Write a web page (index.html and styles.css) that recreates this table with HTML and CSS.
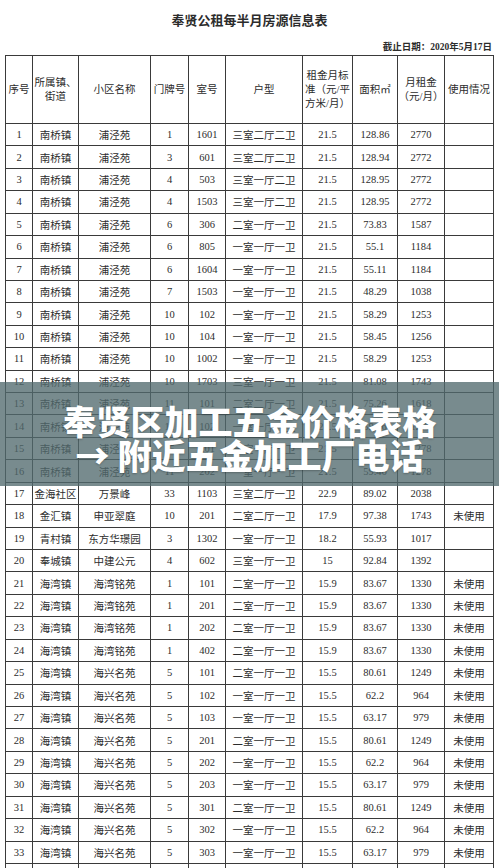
FILE: index.html
```html
<!DOCTYPE html>
<html lang="zh">
<head>
<meta charset="utf-8">
<title>奉贤公租每半月房源信息表</title>
<link rel="stylesheet" href="styles.css">
</head>
<body>
<div class="page">
  <h1 class="title">奉贤公租每半月房源信息表</h1>
  <div class="date">截止日期：2020年5月17日</div>
  <table class="grid">
    <colgroup>
      <col class="c1"><col class="c2"><col class="c3"><col class="c4"><col class="c5">
      <col class="c6"><col class="c7"><col class="c8"><col class="c9"><col class="c10">
    </colgroup>
    <thead>
      <tr>
        <th>序号</th><th>所属镇、<br>街道</th><th>小区名称</th><th>门牌号</th><th>室号</th><th>户型</th>
        <th>租金月标<br>准（元/平<br>方米/月）</th><th>面积㎡</th><th>月租金<br>（元/月）</th><th>使用情况</th>
      </tr>
    </thead>
    <tbody>
      <tr><td>1</td><td>南桥镇</td><td>浦泾苑</td><td>1</td><td>1601</td><td>三室二厅二卫</td><td>21.5</td><td>128.86</td><td>2770</td><td></td></tr>
      <tr><td>2</td><td>南桥镇</td><td>浦泾苑</td><td>3</td><td>601</td><td>三室二厅二卫</td><td>21.5</td><td>128.94</td><td>2772</td><td></td></tr>
      <tr><td>3</td><td>南桥镇</td><td>浦泾苑</td><td>4</td><td>503</td><td>三室一厅二卫</td><td>21.5</td><td>128.95</td><td>2772</td><td></td></tr>
      <tr><td>4</td><td>南桥镇</td><td>浦泾苑</td><td>4</td><td>1503</td><td>三室一厅二卫</td><td>21.5</td><td>128.95</td><td>2772</td><td></td></tr>
      <tr><td>5</td><td>南桥镇</td><td>浦泾苑</td><td>6</td><td>306</td><td>二室一厅一卫</td><td>21.5</td><td>73.83</td><td>1587</td><td></td></tr>
      <tr><td>6</td><td>南桥镇</td><td>浦泾苑</td><td>6</td><td>805</td><td>一室一厅一卫</td><td>21.5</td><td>55.1</td><td>1184</td><td></td></tr>
      <tr><td>7</td><td>南桥镇</td><td>浦泾苑</td><td>6</td><td>1604</td><td>一室一厅一卫</td><td>21.5</td><td>55.11</td><td>1184</td><td></td></tr>
      <tr><td>8</td><td>南桥镇</td><td>浦泾苑</td><td>7</td><td>1503</td><td>一室一厅一卫</td><td>21.5</td><td>48.29</td><td>1038</td><td></td></tr>
      <tr><td>9</td><td>南桥镇</td><td>浦泾苑</td><td>10</td><td>102</td><td>一室一厅一卫</td><td>21.5</td><td>58.29</td><td>1253</td><td></td></tr>
      <tr><td>10</td><td>南桥镇</td><td>浦泾苑</td><td>10</td><td>104</td><td>一室一厅一卫</td><td>21.5</td><td>58.45</td><td>1256</td><td></td></tr>
      <tr><td>11</td><td>南桥镇</td><td>浦泾苑</td><td>10</td><td>1002</td><td>一室一厅一卫</td><td>21.5</td><td>58.29</td><td>1253</td><td></td></tr>
      <tr><td>12</td><td>南桥镇</td><td>浦泾苑</td><td>10</td><td>1703</td><td>三室一厅一卫</td><td>21.5</td><td>81.08</td><td>1743</td><td></td></tr>
      <tr><td>13</td><td>南桥镇</td><td>浦泾苑</td><td>11</td><td>101</td><td>二室二厅一卫</td><td>21.5</td><td>75.26</td><td>1618</td><td></td></tr>
      <tr><td>14</td><td>南桥镇</td><td>浦泾苑</td><td>11</td><td>102</td><td>一室一厅一卫</td><td>21.5</td><td>59.46</td><td>1278</td><td></td></tr>
      <tr><td>15</td><td>南桥镇</td><td>浦泾苑</td><td>15</td><td>201</td><td>一室一厅一卫</td><td>21.5</td><td>59.46</td><td>1278</td><td></td></tr>
      <tr><td>16</td><td>南桥镇</td><td>浦泾苑</td><td>11</td><td>202</td><td>一室一厅一卫</td><td>21.5</td><td>59.46</td><td>1278</td><td></td></tr>
      <tr><td>17</td><td>金海社区</td><td>万景峰</td><td>33</td><td>1103</td><td>三室二厅一卫</td><td>22.9</td><td>89.02</td><td>2038</td><td></td></tr>
      <tr><td>18</td><td>金汇镇</td><td>申亚翠庭</td><td>10</td><td>201</td><td>二室二厅一卫</td><td>17.9</td><td>97.38</td><td>1743</td><td>未使用</td></tr>
      <tr><td>19</td><td>青村镇</td><td>东方华璟园</td><td>3</td><td>1302</td><td>一室一厅一卫</td><td>18.2</td><td>55.93</td><td>1017</td><td></td></tr>
      <tr><td>20</td><td>奉城镇</td><td>中建公元</td><td>4</td><td>602</td><td>三室一厅一卫</td><td>15</td><td>92.84</td><td>1392</td><td></td></tr>
      <tr><td>21</td><td>海湾镇</td><td>海湾铭苑</td><td>1</td><td>101</td><td>二室一厅一卫</td><td>15.9</td><td>83.67</td><td>1330</td><td>未使用</td></tr>
      <tr><td>22</td><td>海湾镇</td><td>海湾铭苑</td><td>1</td><td>201</td><td>二室一厅一卫</td><td>15.9</td><td>83.67</td><td>1330</td><td>未使用</td></tr>
      <tr><td>23</td><td>海湾镇</td><td>海湾铭苑</td><td>1</td><td>202</td><td>二室一厅一卫</td><td>15.9</td><td>83.67</td><td>1330</td><td>未使用</td></tr>
      <tr><td>24</td><td>海湾镇</td><td>海湾铭苑</td><td>1</td><td>402</td><td>二室一厅一卫</td><td>15.9</td><td>83.67</td><td>1330</td><td>未使用</td></tr>
      <tr><td>25</td><td>海湾镇</td><td>海兴名苑</td><td>5</td><td>101</td><td>二室一厅一卫</td><td>15.5</td><td>80.61</td><td>1249</td><td>未使用</td></tr>
      <tr><td>26</td><td>海湾镇</td><td>海兴名苑</td><td>5</td><td>102</td><td>一室一厅一卫</td><td>15.5</td><td>62.2</td><td>964</td><td>未使用</td></tr>
      <tr><td>27</td><td>海湾镇</td><td>海兴名苑</td><td>5</td><td>103</td><td>一室一厅一卫</td><td>15.5</td><td>63.17</td><td>979</td><td>未使用</td></tr>
      <tr><td>28</td><td>海湾镇</td><td>海兴名苑</td><td>5</td><td>201</td><td>二室一厅一卫</td><td>15.5</td><td>80.61</td><td>1249</td><td>未使用</td></tr>
      <tr><td>29</td><td>海湾镇</td><td>海兴名苑</td><td>5</td><td>202</td><td>一室一厅一卫</td><td>15.5</td><td>62.2</td><td>964</td><td>未使用</td></tr>
      <tr><td>30</td><td>海湾镇</td><td>海兴名苑</td><td>5</td><td>203</td><td>一室一厅一卫</td><td>15.5</td><td>63.17</td><td>979</td><td>未使用</td></tr>
      <tr><td>31</td><td>海湾镇</td><td>海兴名苑</td><td>5</td><td>301</td><td>二室一厅一卫</td><td>15.5</td><td>80.61</td><td>1249</td><td>未使用</td></tr>
      <tr><td>32</td><td>海湾镇</td><td>海兴名苑</td><td>5</td><td>302</td><td>一室一厅一卫</td><td>15.5</td><td>62.2</td><td>964</td><td>未使用</td></tr>
      <tr><td>33</td><td>海湾镇</td><td>海兴名苑</td><td>5</td><td>303</td><td>一室一厅一卫</td><td>15.5</td><td>63.17</td><td>979</td><td>未使用</td></tr>
      <tr><td>34</td><td>海湾镇</td><td>海兴名苑</td><td>5</td><td>401</td><td>二室一厅一卫</td><td>15.5</td><td>80.61</td><td>1249</td><td>未使用</td></tr>
    </tbody>
  </table>
</div>
<div class="banner">
  <div class="banner-line">奉贤区加工五金价格表格</div>
  <div class="banner-line">→ 附近五金加工厂电话</div>
</div>
</body>
</html>
```
FILE: styles.css
```css
html, body {
  margin: 0;
  padding: 0;
}
body {
  width: 499px;
  height: 868px;
  overflow: hidden;
  position: relative;
  background: #ffffff;
  color: #2c2c2c;
  font-family: "Liberation Serif", "Noto Sans CJK SC", serif;
}
.page {
  padding: 0 5px;
}
.title {
  margin: 11px 0 0;
  text-align: center;
  font-size: 13px;
  line-height: 18px;
  font-weight: 700;
  font-family: "Noto Sans CJK SC", sans-serif;
}
.date {
  margin-top: 12px;
  text-align: right;
  font-size: 9.5px;
  line-height: 12px;
  font-weight: 700;
  padding-right: 2px;
}
.grid {
  margin-top: 2px;
  border-collapse: collapse;
  table-layout: fixed;
  width: 488px;
}
.c1 { width: 27px; }
.c2 { width: 46px; }
.c3 { width: 72px; }
.c4 { width: 38px; }
.c5 { width: 37px; }
.c6 { width: 77px; }
.c7 { width: 50px; }
.c8 { width: 45px; }
.c9 { width: 47px; }
.c10 { width: 49px; }
.grid th,
.grid td {
  border: 1px solid #3a3a3a;
  padding: 0;
  text-align: center;
  vertical-align: middle;
  font-size: 10.5px;
  font-weight: 400;
  white-space: nowrap;
  overflow: hidden;
}
.grid th {
  line-height: 14px;
  font-size: 10.5px;
}
.grid thead tr {
  height: 68px;
}
.grid tbody tr {
  height: 22.43px;
}
.banner {
  position: absolute;
  left: 0;
  top: 382px;
  width: 499px;
  height: 104px;
  box-sizing: border-box;
  padding-top: 22px;
  background: rgba(82, 106, 110, 0.78);
  color: #ffffff;
  text-align: center;
  font-family: "Noto Sans CJK SC", sans-serif;
  font-weight: 900;
  font-size: 34px;
  line-height: 34px;
  text-shadow: 0 1px 2px rgba(0, 0, 0, 0.25);
}
```
